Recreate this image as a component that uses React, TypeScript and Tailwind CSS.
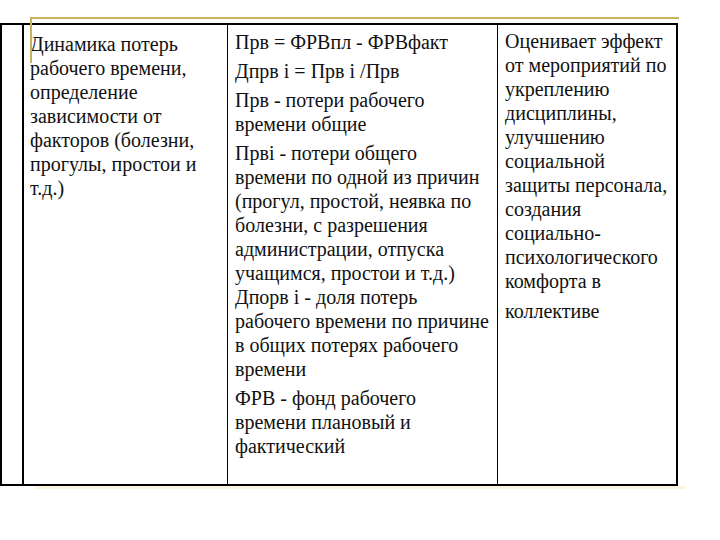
import React from "react";

function Lines({ lines }: { lines: string[] }) {
  return (
    <>
      {lines.map((l, i) => (
        <div key={i} className="whitespace-nowrap">
          {l}
        </div>
      ))}
    </>
  );
}

export default function App() {
  return (
    <div className="relative w-[720px] h-[540px] bg-white text-[#111] overflow-hidden font-['Liberation_Serif','Times_New_Roman',serif]">
      {/* golden decorative frame */}
      <div className="absolute left-[30px] top-[17px] w-[649px] h-[2px] bg-[#c8b25a]" />
      <div className="absolute left-[30px] top-[17px] w-[2px] h-[46px] bg-[#c8b25a]" />
      <div className="absolute left-[35px] top-[486px] w-[650px] h-[3px] bg-[#fbf4dc]" />

      <div className="pt-[23px]">
        <div className="w-[678px] h-[463px] border-2 border-black grid grid-cols-[22px_204px_270px_178px] text-[20px] leading-[24px]">
          <div className="border-r-2 border-black" />
          <div className="border-r border-black pl-[6px] pt-[7px]">
            <Lines
              lines={[
                "Динамика потерь",
                "рабочего времени,",
                "определение",
                "зависимости от",
                "факторов (болезни,",
                "прогулы, простои и",
                "т.д.)",
              ]}
            />
          </div>
          <div className="border-r border-black pl-[7px] pt-[5px] flex flex-col gap-[5px]">
            <div>Прв = ФРВпл - ФРВфакт</div>
            <div>Дпрв і = Прв і /Прв</div>
            <div>
              <Lines lines={["Прв - потери рабочего", "времени общие"]} />
            </div>
            <div>
              <Lines
                lines={[
                  "Прві - потери общего",
                  "времени по одной из причин",
                  "(прогул, простой, неявка по",
                  "болезни, с разрешения",
                  "администрации, отпуска",
                  "учащимся, простои и т.д.)",
                  "Дпорв і - доля потерь",
                  "рабочего времени по причине",
                  "в общих потерях рабочего",
                  "времени",
                ]}
              />
            </div>
            <div>
              <Lines lines={["ФРВ - фонд рабочего", "времени плановый и", "фактический"]} />
            </div>
          </div>
          <div className="pl-[7px] pt-[4px]">
            <Lines
              lines={[
                "Оценивает эффект",
                "от мероприятий по",
                "укреплению",
                "дисциплины,",
                "улучшению",
                "социальной",
                "защиты персонала,",
                "создания",
                "социально-",
                "психологического",
                "комфорта в",
              ]}
            />
            <div className="mt-[6px]">коллективе</div>
          </div>
        </div>
      </div>
    </div>
  );
}
